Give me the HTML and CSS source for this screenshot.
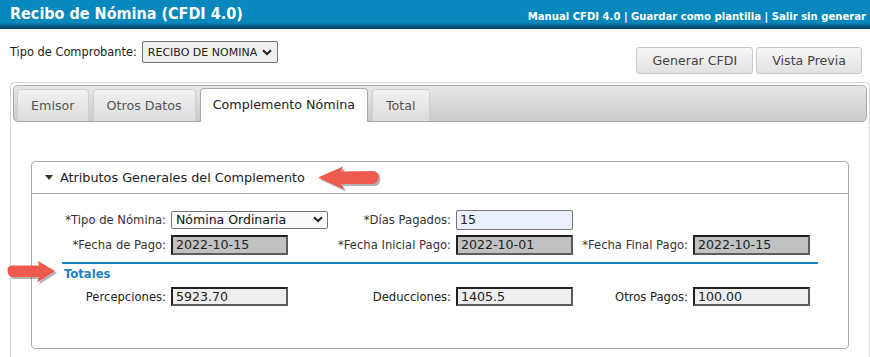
FILE: index.html
```html
<!DOCTYPE html>
<html>
<head>
  <meta charset="utf-8">
  <title>Recibo de Nómina (CFDI 4.0)</title>
  <link rel="stylesheet" href="styles.css">
</head>
<body>
  <!-- barra superior -->
  <div class="topbar">
    <span class="title">Recibo de Nómina (CFDI 4.0)</span>
    <span class="links">Manual CFDI 4.0 | Guardar como plantilla | Salir sin generar</span>
  </div>

  <div class="toolbar">
    <div class="tipo">
      <label>Tipo de Comprobante:</label>
      <div class="sel sel-top">
        <span>RECIBO DE NOMINA</span>
        <svg width="10" height="7" viewBox="0 0 10 7"><path d="M1 1.2 L5 5 L9 1.2" fill="none" stroke="#222" stroke-width="2"/></svg>
      </div>
    </div>
    <div class="actions">
      <button class="btn">Generar CFDI</button>
      <button class="btn">Vista Previa</button>
    </div>
  </div>

  <div class="tabs">
    <ul class="tabbar">
      <li class="tab">Emisor</li>
      <li class="tab">Otros Datos</li>
      <li class="tab active">Complemento Nómina</li>
      <li class="tab">Total</li>
    </ul>

    <div class="tab-body">
      <div class="panel">
        <div class="panel-head">
          <svg class="caret" width="8" height="5" viewBox="0 0 8 5"><path d="M0 0 H8 L4 5 Z" fill="#333"/></svg>
          Atributos Generales del Complemento
        </div>
        <div class="panel-body">
          <div class="row">
            <label>*Tipo de Nómina:</label>
            <div class="cell">
              <div class="sel sel-nomina">
                <span>Nómina Ordinaria</span>
                <svg width="10" height="7" viewBox="0 0 10 7"><path d="M1 1.2 L5 5 L9 1.2" fill="none" stroke="#222" stroke-width="2"/></svg>
              </div>
            </div>
            <label>*Días Pagados:</label>
            <div class="cell"><input class="in in-edit" value="15"></div>
            <span></span><span></span>
          </div>
          <div class="row">
            <label>*Fecha de Pago:</label>
            <div class="cell"><input class="in in-ro" value="2022-10-15" readonly></div>
            <label>*Fecha Inicial Pago:</label>
            <div class="cell"><input class="in in-ro" value="2022-10-01" readonly></div>
            <label>*Fecha Final Pago:</label>
            <div class="cell"><input class="in in-ro" value="2022-10-15" readonly></div>
          </div>

          <div class="section">Totales</div>

          <div class="row">
            <label class="plain">Percepciones:</label>
            <div class="cell"><input class="in in-tot" value="5923.70" readonly></div>
            <label class="plain">Deducciones:</label>
            <div class="cell"><input class="in in-tot" value="1405.5" readonly></div>
            <label class="plain">Otros Pagos:</label>
            <div class="cell"><input class="in in-tot" value="100.00" readonly></div>
          </div>
        </div>
      </div>
    </div>
  </div>

  <!-- flechas de anotacion -->
  <svg class="arrow arrow-left" width="68" height="28" viewBox="0 0 68 28">
    <path d="M2 11.5 L27 0.5 L25 5.5 L57 5 Q63 5.5 62.5 11.5 Q62 17.5 57 18 L25 18 L28 23.5 Z" fill="#444" opacity="0.4" transform="translate(2 2)"/>
    <path d="M2 11.5 L27 0.5 L25 5.5 L57 5 Q63 5.5 62.5 11.5 Q62 17.5 57 18 L25 18 L28 23.5 Z" fill="#ef5a4e"/>
  </svg>
  <svg class="arrow arrow-right" width="56" height="28" viewBox="0 0 56 28">
    <path d="M50 11 L33 1 L34 5.5 L7 5.5 Q2 6 2.5 11 Q3 16.5 7 17 L34 17 L32 22.5 Z" fill="#444" opacity="0.4" transform="translate(2 2)"/>
    <path d="M50 11 L33 1 L34 5.5 L7 5.5 Q2 6 2.5 11 Q3 16.5 7 17 L34 17 L32 22.5 Z" fill="#ef5a4e"/>
  </svg>
</body>
</html>
```

FILE: styles.css
```css
body {
  margin: 0;
  font-family: "DejaVu Sans", Verdana, sans-serif;
  font-size: 11.6px;
  color: #222;
  background: #fff;
  overflow: hidden;
}

.topbar {
  display: flex;
  justify-content: space-between;
  align-items: flex-start;
  height: 29px;
  padding: 0 4px 0 10px;
  background: linear-gradient(#0788bd 0, #0788bd 78%, #045a82 90%, #03425f 100%);
  color: #fff;
  font-family: "DejaVu Sans Condensed", "DejaVu Sans", sans-serif;
  font-weight: bold;
}
.title { font-size: 16px; line-height: 28px; }
.links { font-size: 11.2px; line-height: 33px; }

.toolbar {
  display: flex;
  justify-content: space-between;
  padding: 12px 8px 0 10px;
  height: 53px;
  box-sizing: border-box;
}
.tipo { display: flex; align-items: center; height: 22px; }
.tipo label { margin-right: 5px; font-size: 11.4px; }

.sel {
  display: flex;
  align-items: center;
  justify-content: space-between;
  box-sizing: border-box;
  border: 1px solid #767676;
  border-radius: 2px;
  white-space: nowrap;
}
.sel-top {
  width: 136px;
  height: 22px;
  padding: 0 5px 0 5px;
  background: #efefef;
  font-size: 11px;
}
.sel-nomina {
  width: 157px;
  height: 18px;
  padding: 0 4px 0 4px;
  background: #fafafa;
  font-size: 12.5px;
  color: #111;
}

.actions { display: flex; gap: 3px; padding-top: 6px; }
.btn {
  height: 27px;
  padding: 0 15px;
  border: 1px solid #c8c8c8;
  border-radius: 3px;
  background: linear-gradient(#f6f6f6, #e2e2e2);
  color: #444;
  font-family: "DejaVu Sans", sans-serif;
  font-size: 12.6px;
}

.tabs {
  margin-left: 10px;
  height: 290px;
  padding: 2px;
  border: 1px solid #d6d6d6;
  border-radius: 4px;
  box-sizing: border-box;
}
.tabbar {
  display: flex;
  align-items: flex-end;
  gap: 4px;
  margin: 0;
  height: 37px;
  box-sizing: border-box;
  padding: 0 0 0 3px;
  list-style: none;
  border: 1px solid #a9a9a9;
  border-radius: 5px;
  background: linear-gradient(#e8e8e8, #c9c9c9);
}
.tab {
  height: 31px;
  line-height: 31px;
  padding: 0 13px;
  border: 1px solid #cfcfcf;
  border-bottom: 0;
  border-radius: 4px 4px 0 0;
  background: linear-gradient(#f2f2f2, #dcdcdc);
  color: #555;
  font-size: 12.7px;
}
.tab.active {
  height: 33px;
  margin-bottom: -1px;
  padding: 0 12px;
  border-color: #aaa;
  background: #fff;
  color: #222;
}

.tab-body { padding: 39px 18px 0 18px; }

.panel {
  height: 188px;
  border: 1px solid #aaa;
  border-radius: 4px;
  box-sizing: border-box;
}
.panel-head {
  display: flex;
  align-items: center;
  height: 31px;
  padding-left: 13px;
  border-bottom: 1px solid #aaa;
  font-size: 12.8px;
  color: #222;
}
.caret { margin-right: 7px; }

.panel-body { padding-top: 13px; }

.row {
  display: grid;
  grid-template-columns: 139px 159px 126px 122px 115px 1fr;
  align-items: center;
  height: 25px;
}
.row label {
  text-align: right;
  padding-right: 5px;
  color: #333;
}
.row label.plain { color: #222; }
.cell { display: flex; }

.in {
  width: 117px;
  height: 20px;
  box-sizing: border-box;
  padding: 0 3px;
  font-family: "DejaVu Sans", sans-serif;
  font-size: 12.6px;
  color: #222;
  outline: none;
}
.in-edit {
  border: 1px solid #767676;
  border-radius: 2px;
  background: #e8f0fe;
}
.in-ro {
  border: 2px solid;
  border-color: #222 #5c5c5c #5c5c5c #222;
  background: #c1c1c1;
}
.in-tot {
  height: 19px;
  border: 2px solid;
  border-color: #222 #5c5c5c #5c5c5c #222;
  background: #eeeeee;
}

.section {
  margin: 5px 30px 0 30px;
  padding: 3px 0 3px 2px;
  border-top: 2px solid #1582be;
  color: #1f7fbf;
  font-weight: bold;
}

.arrow { position: absolute; }
.arrow-left { left: 316px; top: 166px; }
.arrow-right { left: 5px; top: 260px; }
```
